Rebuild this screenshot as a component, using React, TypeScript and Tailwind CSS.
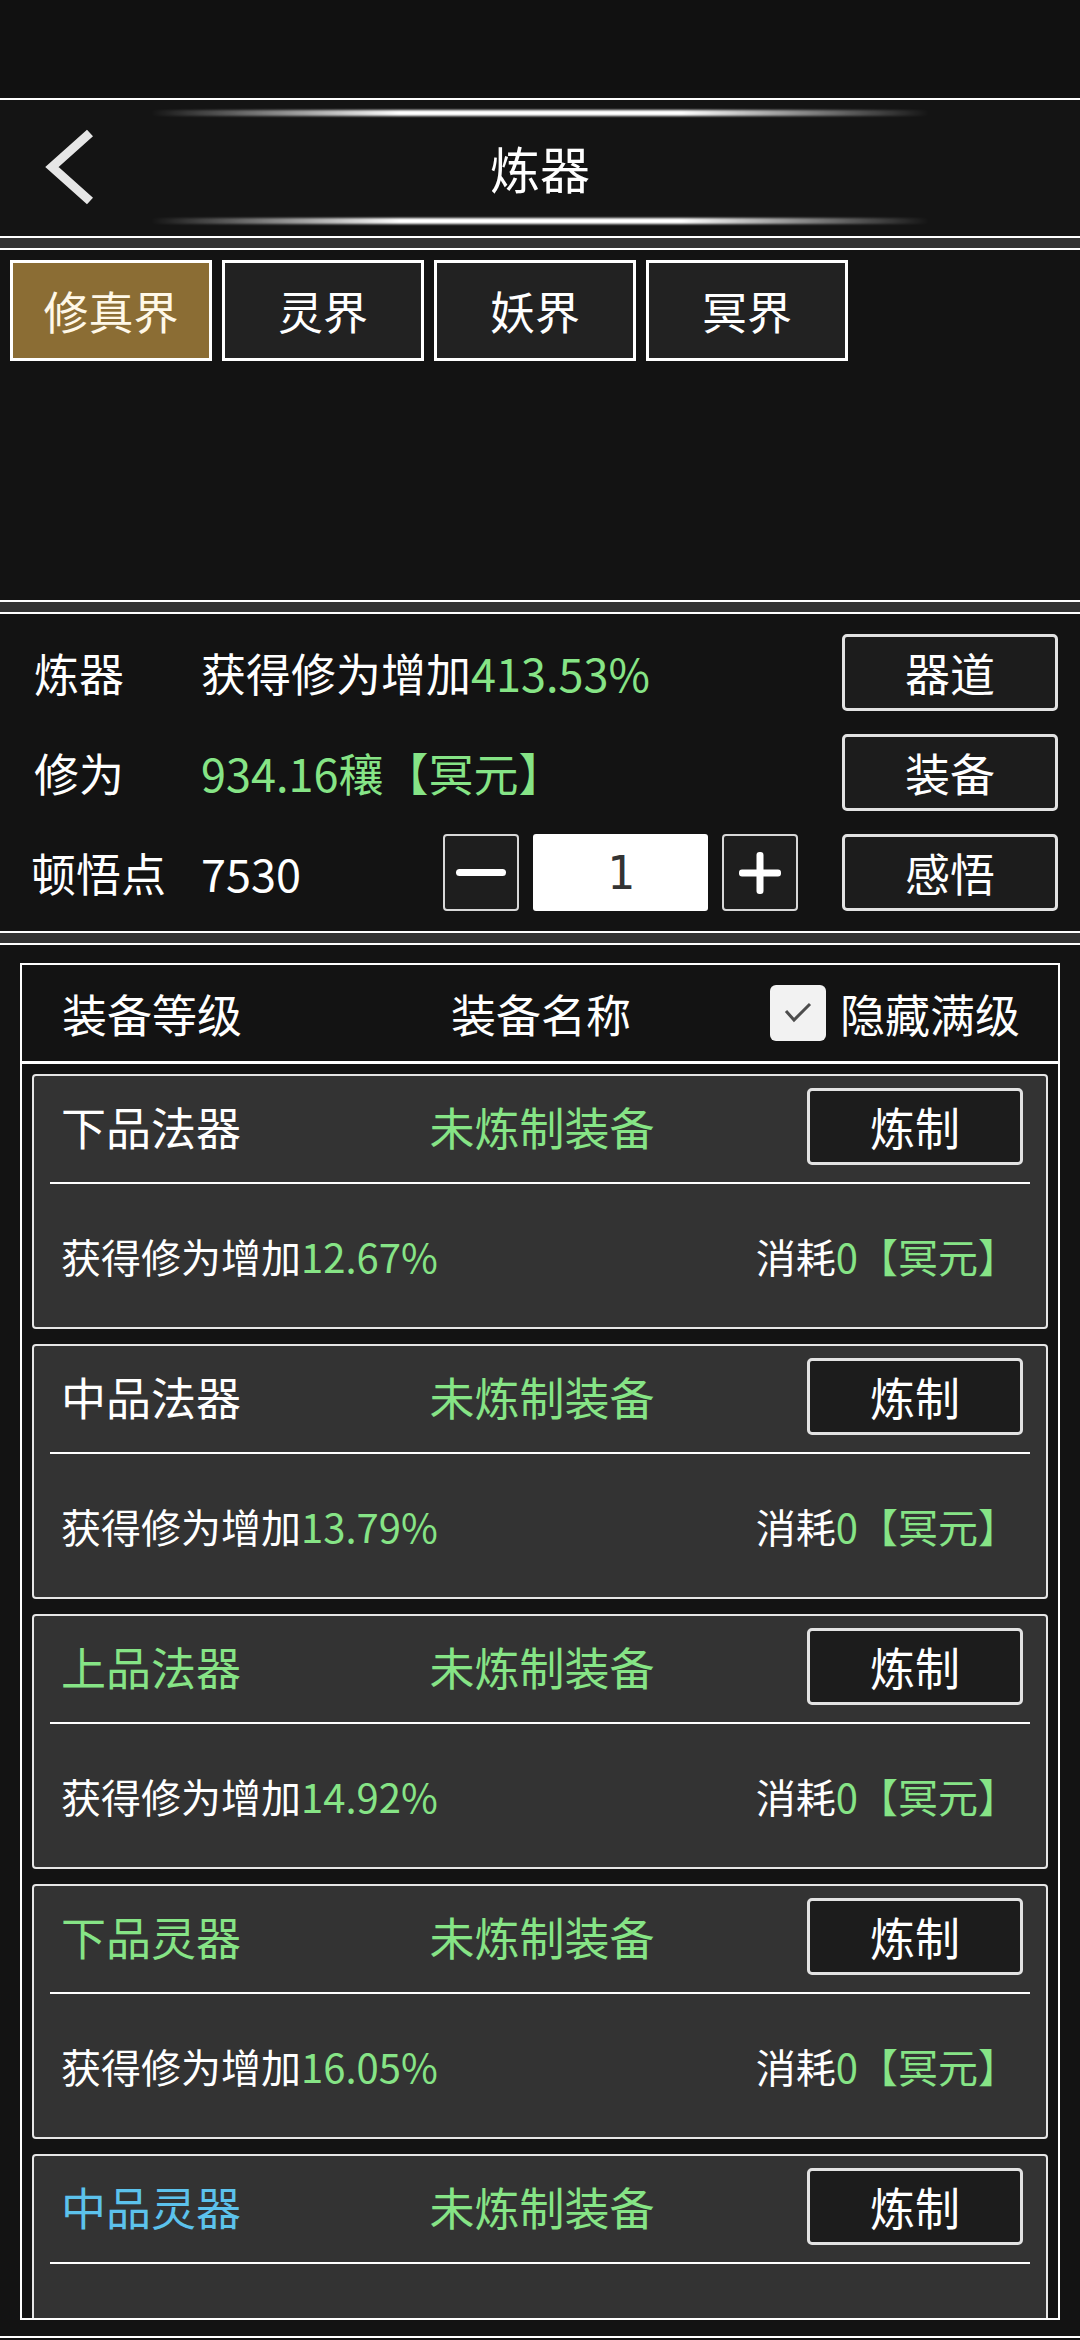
import React from "react";

const GREEN = "text-[#86e486]";
const BLUE = "text-[#5cc2ec]";

interface Equip {
  level: string;
  color: string;
  pct: string;
}

const equips: Equip[] = [
  { level: "下品法器", color: "text-white", pct: "12.67%" },
  { level: "中品法器", color: "text-white", pct: "13.79%" },
  { level: "上品法器", color: GREEN, pct: "14.92%" },
  { level: "下品灵器", color: GREEN, pct: "16.05%" },
  { level: "中品灵器", color: BLUE, pct: "17.18%" },
];

const realms = ["修真界", "灵界", "妖界", "冥界"];

const GlowLine = () => (
  <div className="mx-[150px] h-[6px] rounded-full blur-[1px] bg-[linear-gradient(90deg,transparent,rgba(255,255,255,0.3)_10%,#ffffff_32%,#ffffff_68%,rgba(255,255,255,0.3)_90%,transparent)]" />
);

const Btn: React.FC<{ label: string }> = ({ label }) => (
  <button className="w-[216px] h-[77px] shrink-0 flex items-center justify-center rounded-[5px] border-[3px] border-[#e2e2e2] bg-[#1c1c1c] text-[45px] leading-none text-white">
    {label}
  </button>
);

const Spacer = () => <div className="h-[10px] bg-[#333333]" />;

const EquipCard: React.FC<{ item: Equip }> = ({ item }) => (
  <div className="h-[255px] shrink-0 flex flex-col rounded-[4px] border-2 border-[#e6e6e6] bg-[#333333]">
    <div className="grid grid-cols-[1fr_auto_1fr] items-center pt-[12px] pb-[17px] pl-[27px] pr-[23px]">
      <span className={`text-[45px] leading-none ${item.color}`}>{item.level}</span>
      <span className={`text-[45px] leading-none ${GREEN}`}>未炼制装备</span>
      <div className="flex justify-end">
        <Btn label="炼制" />
      </div>
    </div>
    <div className="mx-[16px] h-[2px] bg-white" />
    <div className="flex flex-1 items-center justify-between pl-[27px] pr-[28px] text-[40px] leading-none text-white">
      <span>
        获得修为增加<span className={GREEN}>{item.pct}</span>
      </span>
      <span>
        消耗<span className={GREEN}>0【冥元】</span>
      </span>
    </div>
  </div>
);

export default function App() {
  return (
    <div className="min-h-[2340px] w-[1080px] bg-[#111111] text-white font-['Noto_Sans_CJK_SC','Noto_Sans',sans-serif]">
      {/* status area */}
      <div className="h-[98px]" />

      {/* header */}
      <div className="h-[140px] border-y-2 border-white bg-[#141414] pt-[10px]">
        <GlowLine />
        <div className="grid grid-cols-[1fr_auto_1fr] items-center h-[102px]">
          <div className="pl-[42px]">
            <svg width="56" height="80" viewBox="0 0 56 80">
              <polyline points="48,6 10,40 48,74" fill="none" stroke="#e6e6e6" strokeWidth="9" strokeLinejoin="miter" />
            </svg>
          </div>
          <span className="text-[50px] leading-none">炼器</span>
          <div />
        </div>
        <GlowLine />
      </div>

      <Spacer />

      {/* realm tabs */}
      <div className="h-[354px] border-y-2 border-white bg-[#131313] pt-[10px] pl-[10px]">
        <div className="flex gap-[10px]">
          {realms.map((r, i) => (
            <div
              key={r}
              className={`w-[202px] h-[101px] flex items-center justify-center border-[3px] border-white text-[45px] leading-none ${
                i === 0 ? "bg-[#8b6d34] text-[#fff8e8]" : "bg-[#222222] text-white"
              }`}
            >
              {r}
            </div>
          ))}
        </div>
      </div>

      <Spacer />

      {/* info */}
      <div className="h-[321px] border-y-2 border-white bg-[#131313] py-[20px] pl-[34px] pr-[22px] flex flex-col gap-[23px] text-[45px] leading-none">
        <div className="flex items-center h-[77px]">
          <span className="w-[167px]">炼器</span>
          <span className="flex-1">
            获得修为增加<span className={GREEN}>413.53%</span>
          </span>
          <Btn label="器道" />
        </div>
        <div className="flex items-center h-[77px]">
          <span className="w-[167px]">修为</span>
          <span className={`flex-1 ${GREEN}`}>934.16穰【冥元】</span>
          <Btn label="装备" />
        </div>
        <div className="flex items-center h-[77px]">
          <span className="w-[170px] -ml-[3px]">顿悟点</span>
          <span className="flex-1">7530</span>
          <div className="flex items-center gap-[14px] mr-[44px]">
            <div className="w-[76px] h-[77px] flex items-center justify-center rounded-[4px] border-2 border-[#d8d8d8] bg-[#1e1e1e]">
              <div className="w-[50px] h-[7px] rounded-full bg-white" />
            </div>
            <div className="w-[175px] h-[77px] flex items-center justify-center rounded-[3px] bg-white text-[#333333] text-[46px] font-['DejaVu_Sans_Mono',monospace]">
              1
            </div>
            <div className="w-[76px] h-[77px] flex items-center justify-center rounded-[4px] border-2 border-[#d8d8d8] bg-[#1e1e1e]">
              <svg width="42" height="42" viewBox="0 0 42 42">
                <rect x="0" y="17.5" width="42" height="7" rx="3" fill="#ffffff" />
                <rect x="17.5" y="0" width="7" height="42" rx="3" fill="#ffffff" />
              </svg>
            </div>
          </div>
          <Btn label="感悟" />
        </div>
      </div>

      <Spacer />

      {/* equipment list */}
      <div className="h-[1395px] border-y-2 border-white bg-[#131313] pt-[18px] pb-[16px] px-[20px]">
        <div className="h-[1357px] flex flex-col border-2 border-white bg-[#131313]">
          <div className="h-[99px] shrink-0 flex items-center border-b-[3px] border-white pl-[40px] pr-[38px] text-[45px] leading-none">
            <span className="flex-1">装备等级</span>
            <span>装备名称</span>
            <div className="flex-1 flex items-center justify-end gap-[14px]">
              <div className="w-[56px] h-[56px] flex items-center justify-center rounded-[6px] bg-[#f2f2f2]">
                <svg width="28" height="22" viewBox="0 0 28 22">
                  <polyline points="2,9 10,18 26,2" fill="none" stroke="#4d4d4d" strokeWidth="3" />
                </svg>
              </div>
              <span>隐藏满级</span>
            </div>
          </div>
          <div className="flex-1 overflow-hidden flex flex-col gap-[15px] pt-[10px] px-[10px]">
            {equips.map((e) => (
              <EquipCard key={e.level} item={e} />
            ))}
          </div>
        </div>
      </div>
    </div>
  );
}
